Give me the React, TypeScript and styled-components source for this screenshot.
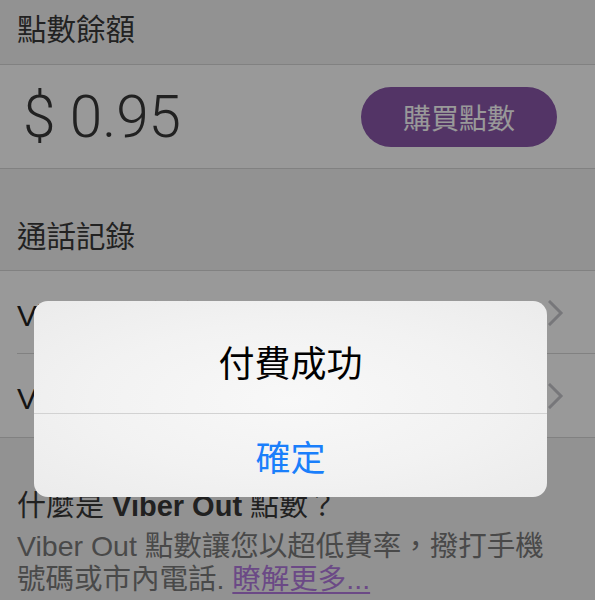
import React from "react";
import styled, { createGlobalStyle } from "styled-components";

const Global = createGlobalStyle`
  html, body { margin: 0; padding: 0; }
  body {
    width: 595px;
    height: 600px;
    overflow: hidden;
    background: #f3f3f3;
    font-family: "Liberation Sans", "Noto Sans CJK TC", sans-serif;
  }
`;

const Screen = styled.div`
  position: relative;
  width: 595px;
  height: 600px;
  overflow: hidden;
  background: #f3f3f3;
  display: flex;
  flex-direction: column;
`;

const SectionHeader = styled.div<{ $h: number; $top: number }>`
  box-sizing: border-box;
  height: ${(p) => p.$h}px;
  padding: ${(p) => p.$top}px 17px 0;
  font-size: 29.5px;
  line-height: 36px;
  color: #3a3a3a;
  border-bottom: 1px solid #d8d8d8;
  flex-shrink: 0;
`;

const BalanceRow = styled.div`
  box-sizing: border-box;
  height: 104px;
  background: #ffffff;
  border-bottom: 1px solid #d8d8d8;
  display: flex;
  align-items: center;
  justify-content: space-between;
  padding: 0 38px 0 23px;
  flex-shrink: 0;
`;

const Amount = styled.div`
  font-family: Roboto, "Liberation Sans", sans-serif;
  font-weight: 300;
  font-size: 58.5px;
  color: #383838;
`;

const BuyButton = styled.button`
  width: 196px;
  height: 60px;
  border: none;
  border-radius: 30px;
  background: #8a57aa;
  color: #ffffff;
  font-family: "Noto Sans CJK TC", sans-serif;
  font-size: 28px;
  padding: 0;
`;

const List = styled.div`
  background: #ffffff;
  border-bottom: 1px solid #d8d8d8;
  flex-shrink: 0;
`;

const Row = styled.div<{ $last?: boolean }>`
  position: relative;
  box-sizing: border-box;
  height: 83px;
  display: flex;
  align-items: center;
  justify-content: space-between;
  padding: 0 31px 0 17px;
  font-size: 30px;
  color: #222;
  &::after {
    content: "";
    display: ${(p) => (p.$last ? "none" : "block")};
    position: absolute;
    left: 17px;
    right: 0;
    bottom: 0;
    height: 1px;
    background: #d8d8d8;
  }
`;

const Info = styled.div`
  padding: 50px 17px 0;
`;

const InfoTitle = styled.div`
  font-size: 29px;
  line-height: 36px;
  color: #383838;
  b {
    font-weight: 700;
  }
`;

const InfoText = styled.div`
  margin-top: 6px;
  font-size: 28.5px;
  line-height: 33px;
  color: #7a7a7a;
`;

const Link = styled.a`
  color: #b27be0;
  text-decoration: underline;
  text-underline-offset: 3px;
`;

const Dim = styled.div`
  position: absolute;
  inset: 0;
  background: rgba(0, 0, 0, 0.4);
`;

const Alert = styled.div`
  position: absolute;
  left: 34px;
  top: 301px;
  width: 513px;
  border-radius: 14px;
  overflow: hidden;
  background: radial-gradient(ellipse at 50% 50%, #f8f8f8 0%, #f2f2f2 55%, #ebebeb 100%);
  display: flex;
  flex-direction: column;
`;

const AlertTitle = styled.div`
  box-sizing: border-box;
  height: 113px;
  padding-top: 8px;
  display: flex;
  align-items: center;
  justify-content: center;
  font-family: "Noto Sans CJK TC", sans-serif;
  font-size: 36px;
  color: #000;
  border-bottom: 1px solid #d2d2d2;
`;

const AlertButton = styled.div`
  height: 83px;
  display: flex;
  align-items: center;
  justify-content: center;
  font-family: "Noto Sans CJK TC", sans-serif;
  font-size: 35px;
  color: #1a7ffb;
`;

const Chevron = () => (
  <svg width="16" height="26" viewBox="0 0 16 26">
    <polyline
      points="2,2 13,13 2,24"
      fill="none"
      stroke="#c7c7cc"
      strokeWidth="3"
      strokeLinecap="square"
    />
  </svg>
);

export default function App() {
  return (
    <>
      <Global />
      <Screen>
        <SectionHeader $h={65} $top={12}>點數餘額</SectionHeader>
        <BalanceRow>
          <Amount>$ 0.95</Amount>
          <BuyButton>購買點數</BuyButton>
        </BalanceRow>
        <SectionHeader $h={102} $top={50}>通話記錄</SectionHeader>
        <List>
          <Row>
            <span>Viber Out 通話</span>
            <Chevron />
          </Row>
          <Row $last>
            <span>Viber Out 付款紀錄</span>
            <Chevron />
          </Row>
        </List>
        <Info>
          <InfoTitle>
            什麼是 <b>Viber Out</b> 點數？
          </InfoTitle>
          <InfoText>
            Viber Out 點數讓您以超低費率，撥打手機
            <br />
            號碼或市內電話. <Link href="#">瞭解更多...</Link>
          </InfoText>
        </Info>
        <Dim />
        <Alert>
          <AlertTitle>付費成功</AlertTitle>
          <AlertButton>確定</AlertButton>
        </Alert>
      </Screen>
    </>
  );
}
